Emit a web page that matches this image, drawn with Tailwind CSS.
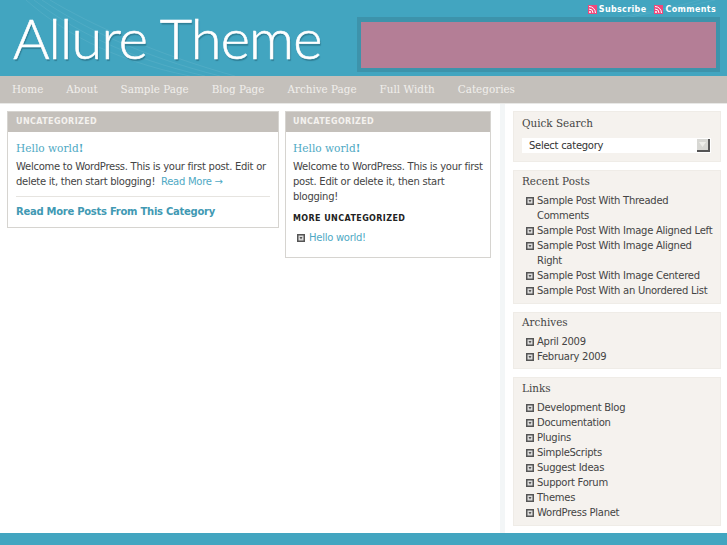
<!DOCTYPE html>
<html lang="en">
  <head>
    <meta charset="UTF-8" />
    <title>Allure Theme</title>
    <script src="https://cdn.jsdelivr.net/npm/@tailwindcss/browser@4"></script>
  </head>
  <body class="bg-white font-['DejaVu_Sans',sans-serif] text-[10px] tracking-[-0.27px] leading-[15px] text-[#444] h-[545px] overflow-hidden flex flex-col">
    <!-- header -->
    <header class="relative h-[76px] bg-[#42a5c0] flex justify-between pl-[13px] pr-[7px] shrink-0">
      <svg class="absolute inset-0" width="727" height="76" viewBox="0 0 727 76" fill="none" stroke="#fff" stroke-opacity="0.07">
        <path d="M26 0C60 30 110 60 190 76" />
        <path d="M34 0C70 28 125 58 205 76" />
        <path d="M42 0C80 26 140 56 220 76" />
        <path d="M50 0C90 24 155 54 235 76" />
        <path d="M620 17C650 12 680 6 700 0" />
        <path d="M630 17C655 12 690 6 715 0" />
      </svg>
      <h1 class="relative font-['Lato',sans-serif] font-light text-[56px] leading-[76px] tracking-[-0.9px] text-white [-webkit-text-stroke:0.6px_#fff] [text-shadow:1px_2px_1px_#2f7f96]">Allure Theme</h1>
      <div class="relative w-[363px] flex flex-col">
        <div class="h-[17px] flex justify-end items-center gap-[8px] pr-[4px] pt-[1px] text-[8px] font-bold tracking-[0.35px] text-white">
          <a class="flex items-center gap-[2px]" href="#">
            <svg width="9" height="9" viewBox="0 0 9 9"><rect width="9" height="9" fill="#f0487c" /><circle cx="2" cy="7" r="1" fill="#fff" /><path d="M1 4a4 4 0 0 1 4 4M1 1.5a6.5 6.5 0 0 1 6.5 6.5" stroke="#fff" fill="none" /></svg>
            Subscribe
          </a>
          <a class="flex items-center gap-[2px]" href="#">
            <svg width="9" height="9" viewBox="0 0 9 9"><rect width="9" height="9" fill="#f0487c" /><circle cx="2" cy="7" r="1" fill="#fff" /><path d="M1 4a4 4 0 0 1 4 4M1 1.5a6.5 6.5 0 0 1 6.5 6.5" stroke="#fff" fill="none" /></svg>
            Comments
          </a>
        </div>
        <div class="h-[55px] bg-[#3d93ab] p-[4px] pt-[5px]">
          <div class="h-full bg-[#b47e96]"></div>
        </div>
      </div>
    </header>

    <!-- nav -->
    <nav class="h-[27px] bg-[#c4c0bb] flex items-center gap-[23px] pl-[12px] font-['DejaVu_Serif',serif] text-[10.4px] tracking-normal text-[#f1efec] shrink-0">
      <a href="#">Home</a>
      <a href="#">About</a>
      <a href="#">Sample Page</a>
      <a href="#">Blog Page</a>
      <a href="#">Archive Page</a>
      <a href="#">Full Width</a>
      <a href="#">Categories</a>
    </nav>

    <div class="flex-1 flex border-t border-[#e8e8e6] min-h-0">
      <!-- posts -->
      <main class="w-[500px] flex items-start gap-[6px] pl-[7px] pt-[7px] shrink-0">
        <section class="w-[272px] border border-[#d6d4d0] bg-white">
          <h2 class="h-[20px] bg-[#c4c0bb] px-[8px] text-[8px] leading-[20px] font-bold tracking-[0.4px] text-[#f4f2ef]">UNCATEGORIZED</h2>
          <div class="px-[8px] pt-[8px] pb-[8px]">
            <h3 class="font-['DejaVu_Serif',serif] text-[10.6px] tracking-normal leading-[16px] text-[#4fa9c4]">Hello world<span class="font-bold">!</span></h3>
            <p class="mt-[3px]">Welcome to WordPress. This is your first post. Edit or delete it, then start blogging! &nbsp;<a class="text-[#4fa9c4]" href="#">Read More →</a></p>
            <div class="mt-[7px] pt-[7px] border-t border-[#e6e4e0] font-bold text-[#4199b3]"><a href="#">Read More Posts From This Category</a></div>
          </div>
        </section>
        <section class="w-[206px] border border-[#d6d4d0] bg-white">
          <h2 class="h-[20px] bg-[#c4c0bb] px-[7px] text-[8px] leading-[20px] font-bold tracking-[0.4px] text-[#f4f2ef]">UNCATEGORIZED</h2>
          <div class="px-[7px] pt-[8px] pb-[12px]">
            <h3 class="font-['DejaVu_Serif',serif] text-[10.6px] tracking-normal leading-[16px] text-[#4fa9c4]">Hello world<span class="font-bold">!</span></h3>
            <p class="mt-[3px]">Welcome to WordPress. This is your first post. Edit or delete it, then start blogging!</p>
            <h4 class="mt-[7px] text-[8px] font-bold text-[#222] tracking-[0.4px]">MORE UNCATEGORIZED</h4>
            <ul class="mt-[4px]">
              <li class="flex items-center gap-[4px] pl-[4px]">
                <svg width="8" height="8" viewBox="0 0 8 8"><rect width="8" height="8" fill="#555" /><rect x="1.5" y="1.5" width="5" height="5" fill="#ddd" /><path d="M2.5 3h3L4 5.5z" fill="#555" /></svg>
                <a class="text-[#4fa9c4]" href="#">Hello world!</a>
              </li>
            </ul>
          </div>
        </section>
      </main>

      <!-- sidebar -->
      <aside class="flex-1 border-l-[5px] border-[#f3f6f7] pl-[8px] pr-[7px] pt-[7px] flex flex-col gap-[8px]">
        <div class="h-[51px] bg-[#f5f2ee] border border-[#efece7] px-[8px]">
          <h3 class="font-['DejaVu_Serif',serif] text-[10.4px] tracking-normal leading-[16px] text-[#444] mt-[3px]">Quick Search</h3>
          <div class="mt-[7px] h-[15px] w-[189px] bg-white flex items-center justify-between pl-[7px] text-[#333] pr-[1px]">
            Select category
            <span class="w-[13px] h-[13px] bg-[#d8d8d4] border-r-2 border-b-2 border-[#555] flex items-center justify-center">
              <svg width="7" height="5" viewBox="0 0 7 5"><path d="M0 0h7L3.5 5z" fill="#eeeeea" /></svg>
            </span>
          </div>
        </div>
        <div class="h-[134px] bg-[#f5f2ee] border border-[#efece7] px-[8px]">
          <h3 class="font-['DejaVu_Serif',serif] text-[10.4px] tracking-normal leading-[16px] text-[#444] mt-[2px] mb-[4px]">Recent Posts</h3>
          <ul>
            <li class="relative pl-[15px]"><svg class="absolute left-[4px] top-[4px]" width="8" height="8" viewBox="0 0 8 8"><rect width="8" height="8" fill="#555" /><rect x="1.5" y="1.5" width="5" height="5" fill="#ddd" /><path d="M2.5 3h3L4 5.5z" fill="#555" /></svg>Sample Post With Threaded<br />Comments</li>
            <li class="relative pl-[15px] whitespace-nowrap"><svg class="absolute left-[4px] top-[4px]" width="8" height="8" viewBox="0 0 8 8"><rect width="8" height="8" fill="#555" /><rect x="1.5" y="1.5" width="5" height="5" fill="#ddd" /><path d="M2.5 3h3L4 5.5z" fill="#555" /></svg>Sample Post With Image Aligned Left</li>
            <li class="relative pl-[15px]"><svg class="absolute left-[4px] top-[4px]" width="8" height="8" viewBox="0 0 8 8"><rect width="8" height="8" fill="#555" /><rect x="1.5" y="1.5" width="5" height="5" fill="#ddd" /><path d="M2.5 3h3L4 5.5z" fill="#555" /></svg>Sample Post With Image Aligned<br />Right</li>
            <li class="relative pl-[15px]"><svg class="absolute left-[4px] top-[4px]" width="8" height="8" viewBox="0 0 8 8"><rect width="8" height="8" fill="#555" /><rect x="1.5" y="1.5" width="5" height="5" fill="#ddd" /><path d="M2.5 3h3L4 5.5z" fill="#555" /></svg>Sample Post With Image Centered</li>
            <li class="relative pl-[15px]"><svg class="absolute left-[4px] top-[4px]" width="8" height="8" viewBox="0 0 8 8"><rect width="8" height="8" fill="#555" /><rect x="1.5" y="1.5" width="5" height="5" fill="#ddd" /><path d="M2.5 3h3L4 5.5z" fill="#555" /></svg>Sample Post With an Unordered List</li>
          </ul>
        </div>
        <div class="h-[57px] bg-[#f5f2ee] border border-[#efece7] px-[8px]">
          <h3 class="font-['DejaVu_Serif',serif] text-[10.4px] tracking-normal leading-[16px] text-[#444] mt-[1px] mb-[4px]">Archives</h3>
          <ul>
            <li class="relative pl-[15px]"><svg class="absolute left-[4px] top-[4px]" width="8" height="8" viewBox="0 0 8 8"><rect width="8" height="8" fill="#555" /><rect x="1.5" y="1.5" width="5" height="5" fill="#ddd" /><path d="M2.5 3h3L4 5.5z" fill="#555" /></svg>April 2009</li>
            <li class="relative pl-[15px]"><svg class="absolute left-[4px] top-[4px]" width="8" height="8" viewBox="0 0 8 8"><rect width="8" height="8" fill="#555" /><rect x="1.5" y="1.5" width="5" height="5" fill="#ddd" /><path d="M2.5 3h3L4 5.5z" fill="#555" /></svg>February 2009</li>
          </ul>
        </div>
        <div class="h-[149px] bg-[#f5f2ee] border border-[#efece7] px-[8px]">
          <h3 class="font-['DejaVu_Serif',serif] text-[10.4px] tracking-normal leading-[16px] text-[#444] mt-[2px] mb-[4px]">Links</h3>
          <ul>
            <li class="relative pl-[15px]"><svg class="absolute left-[4px] top-[4px]" width="8" height="8" viewBox="0 0 8 8"><rect width="8" height="8" fill="#555" /><rect x="1.5" y="1.5" width="5" height="5" fill="#ddd" /><path d="M2.5 3h3L4 5.5z" fill="#555" /></svg>Development Blog</li>
            <li class="relative pl-[15px]"><svg class="absolute left-[4px] top-[4px]" width="8" height="8" viewBox="0 0 8 8"><rect width="8" height="8" fill="#555" /><rect x="1.5" y="1.5" width="5" height="5" fill="#ddd" /><path d="M2.5 3h3L4 5.5z" fill="#555" /></svg>Documentation</li>
            <li class="relative pl-[15px]"><svg class="absolute left-[4px] top-[4px]" width="8" height="8" viewBox="0 0 8 8"><rect width="8" height="8" fill="#555" /><rect x="1.5" y="1.5" width="5" height="5" fill="#ddd" /><path d="M2.5 3h3L4 5.5z" fill="#555" /></svg>Plugins</li>
            <li class="relative pl-[15px]"><svg class="absolute left-[4px] top-[4px]" width="8" height="8" viewBox="0 0 8 8"><rect width="8" height="8" fill="#555" /><rect x="1.5" y="1.5" width="5" height="5" fill="#ddd" /><path d="M2.5 3h3L4 5.5z" fill="#555" /></svg>SimpleScripts</li>
            <li class="relative pl-[15px]"><svg class="absolute left-[4px] top-[4px]" width="8" height="8" viewBox="0 0 8 8"><rect width="8" height="8" fill="#555" /><rect x="1.5" y="1.5" width="5" height="5" fill="#ddd" /><path d="M2.5 3h3L4 5.5z" fill="#555" /></svg>Suggest Ideas</li>
            <li class="relative pl-[15px]"><svg class="absolute left-[4px] top-[4px]" width="8" height="8" viewBox="0 0 8 8"><rect width="8" height="8" fill="#555" /><rect x="1.5" y="1.5" width="5" height="5" fill="#ddd" /><path d="M2.5 3h3L4 5.5z" fill="#555" /></svg>Support Forum</li>
            <li class="relative pl-[15px]"><svg class="absolute left-[4px] top-[4px]" width="8" height="8" viewBox="0 0 8 8"><rect width="8" height="8" fill="#555" /><rect x="1.5" y="1.5" width="5" height="5" fill="#ddd" /><path d="M2.5 3h3L4 5.5z" fill="#555" /></svg>Themes</li>
            <li class="relative pl-[15px]"><svg class="absolute left-[4px] top-[4px]" width="8" height="8" viewBox="0 0 8 8"><rect width="8" height="8" fill="#555" /><rect x="1.5" y="1.5" width="5" height="5" fill="#ddd" /><path d="M2.5 3h3L4 5.5z" fill="#555" /></svg>WordPress Planet</li>
          </ul>
        </div>
      </aside>
    </div>

    <footer class="h-[12px] bg-[#42a5c0] shrink-0"></footer>
  </body>
</html>
